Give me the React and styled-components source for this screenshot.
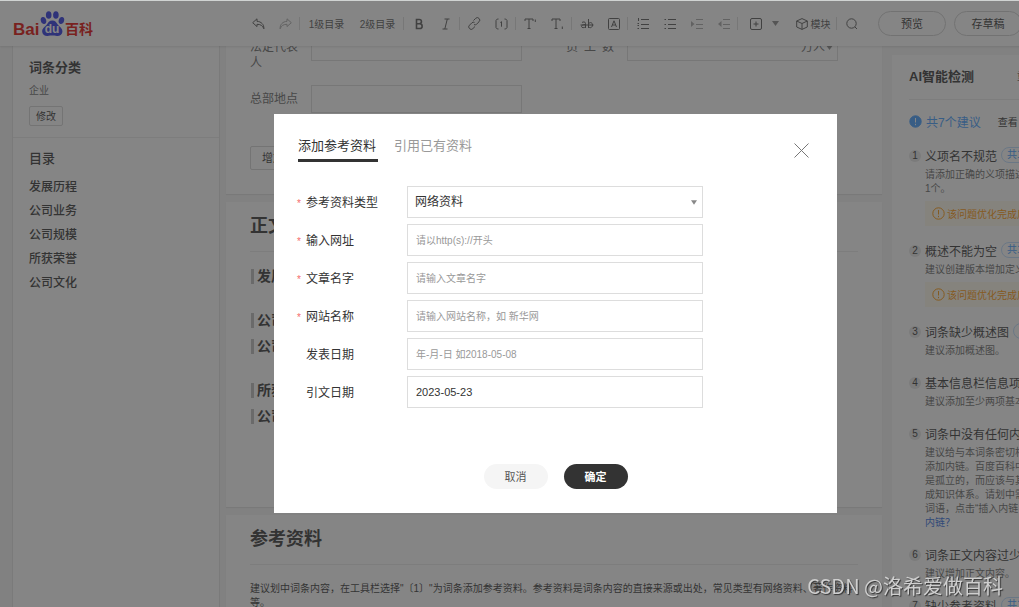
import React, { useState } from 'react';
import styled, { createGlobalStyle, css } from 'styled-components';

const GlobalStyle = createGlobalStyle`
  * {
    box-sizing: border-box;
  }

  body {
    margin: 0;
    overflow: hidden;
    color: #333;
    font-family: 'Liberation Sans', 'Noto Sans CJK SC', sans-serif;
    font-size: 12px;
  }

  h2, h3, h4, p, ul, ol {
    margin: 0;
    padding: 0;
    list-style: none;
  }

  button, input, select {
    font-family: inherit;
    color: inherit;
  }

  button {
    padding: 0;
    border: 0;
    background: none;
    cursor: pointer;
  }

  a {
    text-decoration: none;
  }
`;

const Page = styled.div`
  position: relative;
  display: flex;
  flex-direction: column;
  min-width: 1111px;
  height: 100vh;
  overflow: hidden;
  border-top: 1px solid #d0d3d2;
  background: #f5f5f5;
`;

/* header */

const Header = styled.header`
  position: relative;
  z-index: 1;
  display: flex;
  flex: none;
  align-items: center;
  height: 45px;
  padding-left: 13px;
  background: #fff;
  box-shadow: 0 1px 2px rgba(0, 0, 0, 0.12);
`;

const Logo = styled.a`
  display: flex;
  margin-right: 152px;
`;

const Tools = styled.div`
  display: flex;
  align-items: center;
  margin-right: 13px;
`;

const Tool = styled.button`
  display: flex;
  align-items: center;
  justify-content: center;
  gap: ${(props) => props.$gap || 0}px;
  width: ${(props) => props.$width || 27}px;
  height: 24px;
  font-size: 10px;
  white-space: nowrap;
  color: ${(props) => (props.$muted ? '#a8a8a8' : '#555')};
`;

const Divider = styled.span`
  width: 1px;
  height: 13px;
  margin-right: 1px;
  background: #dcdcdc;
`;

const PillButton = styled.button`
  width: 68px;
  height: 25px;
  margin-right: 8px;
  padding-bottom: 2px;
  border: 1px solid #d0d0d0;
  border-radius: 13px;
  font-size: 11px;
`;

/* columns */

const Body = styled.div`
  display: flex;
  flex: 1;
  min-height: 0;
`;

const Sidebar = styled.nav`
  flex: 0 0 208px;
  margin: 0 6px 0 12px;
  border: solid #e4e4e4;
  border-width: 0 1px;
  background: #fff;
`;

const SideSection = styled.section`
  padding: ${(props) => (props.$first ? '12px 16px 11px' : '11px 16px')};
  border-bottom: ${(props) => (props.$first ? '1px solid #ebebeb' : '0')};
`;

const SideTitle = styled.h3`
  font-size: 13px;
  line-height: 20px;
  font-weight: ${(props) => (props.$bold ? 700 : 500)};
`;

const Category = styled.p`
  margin: 5px 0 7px;
  font-size: 10px;
  line-height: 16px;
  color: #666;
`;

const SmallButton = styled.button`
  display: block;
  width: ${(props) => props.$width}px;
  height: ${(props) => props.$height}px;
  padding-bottom: 2px;
  border: 1px solid #d4d4d4;
  border-radius: 2px;
  font-size: ${(props) => props.$size}px;
`;

const Outline = styled.ul`
  margin-top: 6px;
  line-height: 24px;

  a {
    color: #333;
    font-weight: 500;
  }
`;

const Main = styled.main`
  display: flex;
  flex: 1;
  flex-direction: column;
  gap: 8px;
  min-width: 0;
  margin-top: -13px;
`;

const Card = styled.section`
  flex: none;
  padding: ${(props) => props.$padding};
  background: #fff;
  box-shadow: 0 1px 1px rgba(0, 0, 0, 0.08);
`;

const InfoRow = styled.div`
  display: flex;
  gap: 44px;
  margin-bottom: ${(props) => props.$space}px;
`;

const InfoField = styled.div`
  position: relative;
  display: flex;
  align-items: flex-start;
  gap: 13px;
  line-height: 16px;

  label {
    width: 48px;
    padding-top: 6px;
    color: #666;
    text-align-last: ${(props) => (props.$justify ? 'justify' : 'left')};
  }

  input {
    width: 211px;
    height: 28px;
    border: 1px solid #ddd;
    background: #fff;
  }
`;

const Unit = styled.span`
  position: absolute;
  top: 6px;
  right: 5px;
  display: flex;
  align-items: center;
  gap: 1px;
  color: #666;
`;

const CardTitle = styled.h2`
  padding-bottom: 13px;
  border-bottom: 1px solid #ebebeb;
  font-size: 18px;
  line-height: 24px;
`;

const Heading = styled.h4`
  display: flex;
  align-items: center;
  gap: 3px;
  padding-left: 1px;
  margin-top: ${(props) => (props.$spaced ? 28 : 10)}px;
  font-size: 14px;
  line-height: 16px;

  &:first-of-type {
    margin-top: 16px;
  }

  &::before {
    content: '';
    width: 3px;
    height: 15px;
    background: #bbb;
  }
`;

const Hint = styled.p`
  margin-top: 17px;
  font-size: 10px;
  line-height: 14px;
`;

/* AI check panel */

const CheckPanel = styled.aside`
  flex: 0 0 219px;
  margin: 9px 0 0 10px;
  padding: 11px 16px 11px 17px;
  background: #fff;
  white-space: nowrap;
`;

const PanelHead = styled.div`
  display: flex;
  align-items: center;
  gap: 43px;
  height: 34px;
  padding-bottom: 15px;
  border-bottom: 1px solid #ebebeb;

  h3 {
    font-size: 13px;
  }

  a {
    font-size: 10px;
    color: #555;
  }
`;

const Summary = styled.div`
  display: flex;
  align-items: center;
  gap: 4px;
  height: 20px;
  margin: 11px 0 16px;
  color: #409cff;

  a {
    margin-left: 13px;
    font-size: 10px;
    color: #333;
  }
`;

const CheckList = styled.ol`
  display: flex;
  flex-direction: column;
  gap: 16px;
`;

const CheckItem = styled.li`
  display: grid;
  grid-template-columns: 12px 1fr;
  column-gap: 4px;
`;

const ItemNumber = styled.span`
  width: 12px;
  height: 12px;
  margin-top: 3px;
  border-radius: 50%;
  background: #e6e6e6;
  font-size: 10px;
  line-height: 12px;
  text-align: center;
`;

const ItemTitle = styled.h4`
  display: flex;
  align-items: center;
  gap: 4px;
  height: 16px;
  font-weight: 400;
`;

const Count = styled.span`
  height: 16px;
  padding: 0 5px;
  border: 1px solid #bcdcff;
  border-radius: 8px;
  font-size: 10px;
  line-height: 14px;
  color: #409cff;
`;

const ItemText = styled.div`
  margin-top: 5px;
  font-size: 10px;
  line-height: 14px;
  color: #666;

  a {
    color: #2a6ae0;
  }
`;

const Notice = styled.p`
  display: flex;
  align-items: center;
  gap: 2px;
  height: 25px;
  margin-top: 5px;
  padding-left: 7px;
  background: #fff9ec;
  font-size: 10px;
  color: #ff9500;
`;

/* dialog */

const Overlay = styled.div`
  position: absolute;
  inset: 0;
  z-index: 2;
  display: flex;
  align-items: flex-start;
  justify-content: center;
  padding-top: 113px;
  background: rgba(51, 51, 51, 0.6);
`;

const Dialog = styled.form`
  position: relative;
  width: 563px;
  padding: 20px 24px 24px;
  background: #fff;
`;

const Tabs = styled.div`
  display: flex;
  gap: 16px;
  margin-bottom: 24px;
`;

const Tab = styled.button`
  width: 80px;
  height: 28px;
  padding-bottom: 7px;
  font-size: 13px;
  text-align: left;
  color: #999;

  ${(props) =>
    props.$active &&
    css`
      padding-bottom: 4px;
      border-bottom: 3px solid #333;
      color: #333;
    `}
`;

const CloseButton = styled.button`
  position: absolute;
  top: 28px;
  right: 27px;
  display: flex;
`;

const Fields = styled.div`
  display: flex;
  flex-direction: column;
  gap: 6px;
`;

const Field = styled.div`
  position: relative;
  display: flex;
  align-items: center;

  label {
    width: 109px;
    padding: 0 0 2px 8px;
  }

  label::before {
    content: '${(props) => (props.$required ? '*' : '')}';
    width: 9px;
    margin-left: -9px;
    display: inline-block;
    font-size: 10px;
    color: #f56c6c;
  }

  input,
  select {
    width: 296px;
    height: 32px;
    padding: 0 8px;
    border: 1px solid #ddd;
    border-radius: 0;
    background: #fff;
    font-size: 11px;
    outline: none;
  }

  select {
    padding: 0 7px;
    font-size: 12px;
    appearance: none;
  }

  input::placeholder {
    font-size: 10px;
    color: #999;
  }

  svg {
    position: absolute;
    left: 393px;
  }
`;

const Actions = styled.div`
  display: flex;
  justify-content: center;
  gap: 16px;
  margin-top: 56px;
`;

const ActionButton = styled.button`
  width: 64px;
  height: 25px;
  padding-bottom: 2px;
  border-radius: 13px;
  background: ${(props) => (props.$primary ? '#333' : '#f5f5f5')};
  color: ${(props) => (props.$primary ? '#fff' : '#555')};
  font-size: 11px;
  font-weight: ${(props) => (props.$primary ? 700 : 400)};
`;

const Watermark = styled.div`
  position: fixed;
  right: 16px;
  bottom: 9px;
  z-index: 3;
  font-family: 'Noto Sans CJK SC', sans-serif;
  font-size: 20px;
  line-height: 24px;
  color: #cfcfcf;
  text-shadow: 1px 1px 1px #333;
`;

/* icons */

function Icon({ children, width = 14, height = 14 }) {
  return (
    <svg
      width={width}
      height={height}
      viewBox={`0 0 ${width} ${height}`}
      fill="none"
      stroke="currentColor"
      aria-hidden="true"
    >
      {children}
    </svg>
  );
}

const Caret = ({ width = 7 }) => (
  <svg width={width} height="5" viewBox="0 0 7 5" aria-hidden="true">
    <path d="M0 0h7L3.5 5z" fill="#888" />
  </svg>
);

const LogoMark = () => (
  <svg width="80" height="26" viewBox="0 0 80 26" role="img" aria-label="百度百科">
    <g fill="#2932e1">
      <ellipse cx="30.5" cy="9.5" rx="2.7" ry="3.6" transform="rotate(-15 30.5 9.5)" />
      <ellipse cx="35.7" cy="4" rx="2.8" ry="3.8" />
      <ellipse cx="42.9" cy="4" rx="2.8" ry="3.8" />
      <ellipse cx="48.4" cy="9.5" rx="2.7" ry="3.6" transform="rotate(15 48.4 9.5)" />
      <path d="M39.3 9.5c3 0 4.2 2.2 5.6 4.2 1.7 2.2 4.9 3.6 4.5 7.2-.4 3.2-3 4.2-5.400 4-2-.2-3-.4-4.700-.4s-2.700.2-4.700.4c-2.400.2-5-.8-5.400-4-.4-3.600 2.800-5 4.500-7.200 1.400-2 2.600-4.200 5.600-4.200z" />
    </g>
    <g fill="#e10602" fontWeight="700">
      <text x="0" y="24" fontSize="17">Bai</text>
      <text x="52" y="23" fontSize="14">百科</text>
    </g>
    <text x="39" y="22" fontSize="12" fontWeight="700" fill="#fff" textAnchor="middle">du</text>
  </svg>
);

const UndoIcon = () => (
  <Icon width={13} height={12}>
    <path d="M5 .8.7 4.700 5 8.600V6.300c3.500 0 5.600 1.200 6.900 4.500.2-4.300-2.600-7.200-6.900-7.500z" strokeLinejoin="round" />
  </Icon>
);

const RedoIcon = () => (
  <Icon width={13} height={12}>
    <path d="M8 .8l4.300 3.900L8 8.600V6.300c-3.500 0-5.600 1.200-6.900 4.500C.9 6.500 3.700 3.600 8 3.300z" strokeLinejoin="round" />
  </Icon>
);

const BoldIcon = () => (
  <Icon width={10} height={12}>
    <path d="M2.500 1.500h2.800a2 2 0 0 1 0 4.300H2.500zM2.500 5.800h3.300a2.300 2.300 0 0 1 0 4.700H2.500z" strokeWidth="1.600" />
  </Icon>
);

const ItalicIcon = () => (
  <Icon width={8} height={12}>
    <path d="M2.500 1h5M.5 11h5M5.300 1l-2.500 10" />
  </Icon>
);

const LinkIcon = () => (
  <Icon width={13} height={13}>
    <path d="M5.500 3.500 7.600 1.400a2.300 2.300 0 0 1 3.400 0 2.300 2.300 0 0 1 0 3.400L8.600 7.200a2.300 2.300 0 0 1-2.600.4" />
    <path d="M7 9.500l-2.100 2.100a2.300 2.300 0 0 1-3.400 0 2.300 2.300 0 0 1 0-3.400l2.400-2.400A2.300 2.300 0 0 1 6.500 5.400" />
  </Icon>
);

const CiteIcon = () => (
  <Icon width={13} height={12}>
    <path d="M3.500 1H2.300L1 2.500v7L2.300 11h1.200M9.500 1h1.200L12 2.500v7L10.700 11H9.500M5.300 4.500l1.200-.8v5" />
  </Icon>
);

const ScriptIcon = ({ low }) => (
  <Icon width={13} height={12}>
    <path d="M1 3V1h8v2M5 1v9.500M3.500 10.500h3" />
    <path d={low ? 'M11.300 8.500v2.500' : 'M11.300 1.500v2.500'} />
  </Icon>
);

const StrikeIcon = () => (
  <Icon width={14} height={12}>
    <path d="M2 4.500c1-.8 3.500-1 3.500 1V10M5.500 6.500C3 6.500 1.500 7.200 1.500 8.500S4.500 10.300 5.500 8.500M8.500 1v9M8.500 6c1-2.200 4-1.800 4 1s-3 3.600-4 1.500M.5 7h13" />
  </Icon>
);

const LetterBoxIcon = () => (
  <Icon width={12} height={12}>
    <rect x=".5" y=".5" width="11" height="11" rx="1" />
    <path d="M3.500 9 6 2.800 8.500 9M4.300 7h3.400" />
  </Icon>
);

const ListIcon = ({ ordered }) => (
  <Icon width={12} height={12}>
    <path d="M4 1.500h8M4 6.500h8M4 10.500h8" />
    <path d={ordered ? 'M1.500 0v3M.5 5.500h1.500M.5 7.500h1.500M.5 10.500h1.500' : 'M.5 1.500H2M.5 6.500H2M.5 10.500H2'} />
  </Icon>
);

const IndentIcon = ({ back }) => (
  <Icon width={12} height={12}>
    <path d="M5 1.500h7M5 6.500h7M5 10.500h7" />
    <path d={back ? 'M3.500 3v6L0 6z' : 'M0 3v6l3.500-3z'} fill="currentColor" stroke="none" />
  </Icon>
);

const PlusBoxIcon = () => (
  <Icon width={12} height={12}>
    <rect x=".5" y=".5" width="11" height="11" rx="1.500" />
    <path d="M6 3.500v5M3.500 6h5" />
  </Icon>
);

const CubeIcon = () => (
  <Icon width={12} height={12}>
    <path d="M6 .6 11.300 3v6L6 11.400.7 9V3zM.7 3 6 5.500 11.300 3M6 5.500v5.900" strokeLinejoin="round" />
  </Icon>
);

const SearchIcon = () => (
  <Icon width={12} height={12}>
    <circle cx="5.500" cy="5.500" r="4.700" />
    <path d="M8.900 8.900 11 11" />
  </Icon>
);

const AlertIcon = ({ solid }) => (
  <Icon width={13} height={13}>
    <circle cx="6.500" cy="6.500" r="5.700" fill={solid ? 'currentColor' : 'none'} />
    <path d="M6.500 3v4.500M6.500 8.800v1.400" stroke={solid ? '#fff' : 'currentColor'} />
  </Icon>
);

const outline = ['发展历程', '公司业务', '公司规模', '所获荣誉', '公司文化'];

const checks = [
  { title: '义项名不规范', lines: ['请添加正确的义项描述', '1个。'], count: true, notice: true },
  { title: '概述不能为空', lines: ['建议创建版本增加定义'], count: true, notice: true },
  { title: '词条缺少概述图', lines: ['建议添加概述图。'], count: true },
  { title: '基本信息栏信息项', lines: ['建议添加至少两项基本'] },
  {
    title: '词条中没有任何内链',
    lines: [
      '建议给与本词条密切相',
      '添加内链。百度百科中',
      '是孤立的，而应该与其',
      '成知识体系。请划中需',
      '词语，点击“插入内链',
    ],
    link: '内链？',
  },
  { title: '词条正文内容过少', lines: ['建议增加正文内容。'] },
  { title: '缺少参考资料', lines: [], count: true },
];

const fields = [
  { id: 'url', label: '输入网址', placeholder: '请以http(s)://开头', required: true },
  { id: 'article', label: '文章名字', placeholder: '请输入文章名字', required: true },
  { id: 'site', label: '网站名称', placeholder: '请输入网站名称，如 新华网', required: true },
  { id: 'published', label: '发表日期', placeholder: '年-月-日 如2018-05-08' },
  { id: 'cited', label: '引文日期', value: '2023-05-23' },
];

function Toolbar() {
  return (
    <Header>
      <Logo href="#">
        <LogoMark />
      </Logo>
      <Tools>
        <Tool aria-label="撤销"><UndoIcon /></Tool>
        <Tool aria-label="重做" $muted><RedoIcon /></Tool>
        <Divider />
        <Tool $width={51}>1级目录</Tool>
        <Tool $width={51}>2级目录</Tool>
        <Divider />
        <Tool aria-label="加粗"><BoldIcon /></Tool>
        <Tool aria-label="斜体"><ItalicIcon /></Tool>
        <Divider />
        <Tool aria-label="链接"><LinkIcon /></Tool>
        <Tool aria-label="参考资料"><CiteIcon /></Tool>
        <Divider />
        <Tool aria-label="上标"><ScriptIcon /></Tool>
        <Tool aria-label="下标"><ScriptIcon low /></Tool>
        <Divider />
        <Tool aria-label="删除线"><StrikeIcon /></Tool>
        <Tool aria-label="代码"><LetterBoxIcon /></Tool>
        <Divider />
        <Tool aria-label="有序列表"><ListIcon ordered /></Tool>
        <Tool aria-label="无序列表"><ListIcon /></Tool>
        <Tool aria-label="增加缩进" $muted><IndentIcon /></Tool>
        <Tool aria-label="减少缩进" $muted><IndentIcon back /></Tool>
        <Divider />
        <Tool aria-label="插入" $width={51} $gap={10}>
          <PlusBoxIcon />
          <Caret />
        </Tool>
        <Tool $width={46} $gap={3}>
          <CubeIcon />
          模块
        </Tool>
        <Divider />
        <Tool aria-label="搜索"><SearchIcon /></Tool>
      </Tools>
      <PillButton>预览</PillButton>
      <PillButton>存草稿</PillButton>
    </Header>
  );
}

function Checks() {
  return (
    <CheckPanel>
      <PanelHead>
        <h3>AI智能检测</h3>
        <a href="#">重新检测</a>
      </PanelHead>
      <Summary>
        <AlertIcon solid />
        <span>共7个建议</span>
        <a href="#">查看</a>
      </Summary>
      <CheckList>
        {checks.map((item, index) => (
          <CheckItem key={item.title}>
            <ItemNumber>{index + 1}</ItemNumber>
            <div>
              <ItemTitle>
                {item.title}
                {item.count && <Count>共1个</Count>}
              </ItemTitle>
              <ItemText>
                {item.lines.map((line) => (
                  <p key={line}>{line}</p>
                ))}
                {item.link && <a href="#">{item.link}</a>}
              </ItemText>
              {item.notice && (
                <Notice>
                  <AlertIcon />
                  该问题优化完成后
                </Notice>
              )}
            </div>
          </CheckItem>
        ))}
      </CheckList>
    </CheckPanel>
  );
}

function ReferenceDialog({ onClose }) {
  const [tab, setTab] = useState('add');

  return (
    <Overlay>
      <Dialog role="dialog" aria-label="添加参考资料" onSubmit={(e) => e.preventDefault()}>
        <Tabs>
          <Tab type="button" $active={tab === 'add'} onClick={() => setTab('add')}>
            添加参考资料
          </Tab>
          <Tab type="button" $active={tab === 'cite'} onClick={() => setTab('cite')}>
            引用已有资料
          </Tab>
        </Tabs>
        <CloseButton type="button" aria-label="关闭" onClick={onClose}>
          <svg width="17" height="17" viewBox="0 0 17 17" stroke="#777" aria-hidden="true">
            <path d="M1.500 1.500l14 14M15.500 1.500l-14 14" />
          </svg>
        </CloseButton>
        <Fields>
          <Field $required>
            <label htmlFor="type">参考资料类型</label>
            <select id="type">
              <option>网络资料</option>
            </select>
            <Caret width={6} />
          </Field>
          {fields.map((field) => (
            <Field key={field.id} $required={field.required}>
              <label htmlFor={field.id}>{field.label}</label>
              <input id={field.id} placeholder={field.placeholder} defaultValue={field.value} />
            </Field>
          ))}
        </Fields>
        <Actions>
          <ActionButton type="button" onClick={onClose}>取消</ActionButton>
          <ActionButton type="submit" $primary>确定</ActionButton>
        </Actions>
      </Dialog>
    </Overlay>
  );
}

function App() {
  const [open, setOpen] = useState(true);

  return (
    <>
      <GlobalStyle />
      <Page>
        <Toolbar />
        <Body>
          <Sidebar>
            <SideSection $first>
              <SideTitle $bold>词条分类</SideTitle>
              <Category>企业</Category>
              <SmallButton $width={34} $height={20} $size={10}>修改</SmallButton>
            </SideSection>
            <SideSection>
              <SideTitle>目录</SideTitle>
              <Outline>
                {outline.map((name) => (
                  <li key={name}>
                    <a href="#">{name}</a>
                  </li>
                ))}
              </Outline>
            </SideSection>
          </Sidebar>
          <Main>
            <Card $padding="0 24px 24px">
              <InfoRow $space={14}>
                <InfoField>
                  <label htmlFor="legal">法定代表人</label>
                  <input id="legal" />
                </InfoField>
                <InfoField $justify>
                  <label htmlFor="staff">员工数</label>
                  <input id="staff" />
                  <Unit>
                    万人
                    <Caret />
                  </Unit>
                </InfoField>
              </InfoRow>
              <InfoRow $space={33}>
                <InfoField>
                  <label htmlFor="place">总部地点</label>
                  <input id="place" />
                </InfoField>
              </InfoRow>
              <SmallButton $width={68} $height={24} $size={11}>增加一项</SmallButton>
            </Card>
            <Card $padding="12px 24px 83px">
              <CardTitle>正文</CardTitle>
              {outline.map((name, index) => (
                <Heading key={name} $spaced={index % 2 === 1}>
                  {name}
                </Heading>
              ))}
            </Card>
            <Card $padding="12px 24px 24px">
              <CardTitle>参考资料</CardTitle>
              <Hint>
                建议划中词条内容，在工具栏选择"〔1〕"为词条添加参考资料。参考资料是词条内容的直接来源或出处，常见类型有网络资料、著作资料等。
              </Hint>
            </Card>
          </Main>
          <Checks />
        </Body>
        {open && <ReferenceDialog onClose={() => setOpen(false)} />}
      </Page>
      <Watermark>CSDN @洛希爱做百科</Watermark>
    </>
  );
}

export default App;
